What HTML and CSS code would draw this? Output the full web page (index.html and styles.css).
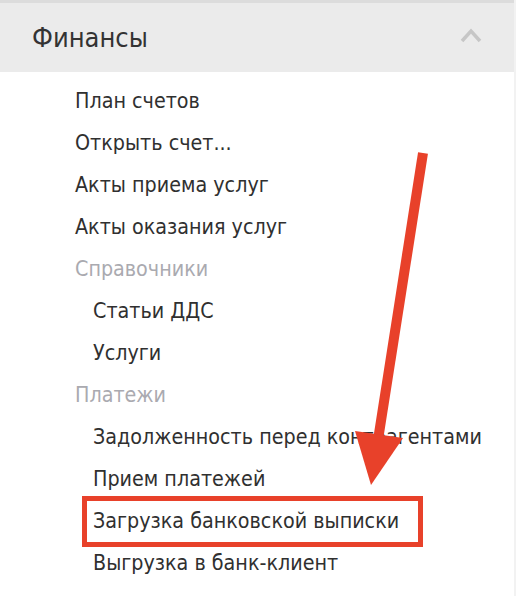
FILE: index.html
```html
<!DOCTYPE html>
<html lang="ru">
<head>
<meta charset="utf-8">
<title>Финансы</title>
<link rel="stylesheet" href="styles.css">
</head>
<body>
<div class="panel">
  <div class="topline"></div>
  <div class="header">
    <span class="header-title">Финансы</span>
    <svg class="chevron" width="22" height="16" viewBox="0 0 22 16"><polyline points="2,13 11,3 20,13" fill="none" stroke="#c6c6c6" stroke-width="3.5"/></svg>
  </div>
  <ul class="menu">
    <li class="item l1">План счетов</li>
    <li class="item l1">Открыть счет...</li>
    <li class="item l1">Акты приема услуг</li>
    <li class="item l1">Акты оказания услуг</li>
    <li class="item l1 group">Справочники</li>
    <li class="item l2">Статьи ДДС</li>
    <li class="item l2">Услуги</li>
    <li class="item l1 group">Платежи</li>
    <li class="item l2">Задолженность перед контрагентами</li>
    <li class="item l2">Прием платежей</li>
    <li class="item l2 marked">Загрузка банковской выписки</li>
    <li class="item l2">Выгрузка в банк-клиент</li>
  </ul>
</div>
<svg class="arrow" width="516" height="596" viewBox="0 0 516 596">
  <line x1="423" y1="153" x2="378" y2="440" stroke="#e8412a" stroke-width="10"/>
  <polygon points="355,431 403,438 371,485" fill="#e8412a"/>
</svg>
</body>
</html>
```
FILE: styles.css
```css
html {
  background: #f2f2f2;
}
body {
  margin: 0;
  width: 516px;
  height: 596px;
  overflow: hidden;
  position: relative;
  font-family: "DejaVu Sans Condensed", "DejaVu Sans", sans-serif;
  color: #303030;
}
.panel {
  width: 514px;
  height: 596px;
  background: #fff;
}
.topline {
  height: 3px;
  background: #dcdcdc;
}
.header {
  height: 69px;
  background: #ebebeb;
  display: flex;
  align-items: center;
  justify-content: space-between;
  padding: 0 32px 0 32px;
}
.header-title {
  font-size: 27px;
  color: #333;
}
.chevron {
  display: block;
  margin-top: -4px;
}
.menu {
  list-style: none;
  margin: 0;
  padding: 8px 0 0 0;
}
.item {
  height: 42px;
  line-height: 42px;
  font-size: 21.3px;
  white-space: nowrap;
}
.l1 {
  padding-left: 75px;
}
.l2 {
  padding-left: 93px;
}
.group {
  color: #aaaab0;
}
.marked {
  position: relative;
}
.marked::after {
  content: "";
  position: absolute;
  left: 82px;
  width: 341px;
  top: -4px;
  height: 51px;
  box-sizing: border-box;
  border: 5px solid #e8412a;
}
.arrow {
  position: absolute;
  left: 0;
  top: 0;
  pointer-events: none;
}
```
